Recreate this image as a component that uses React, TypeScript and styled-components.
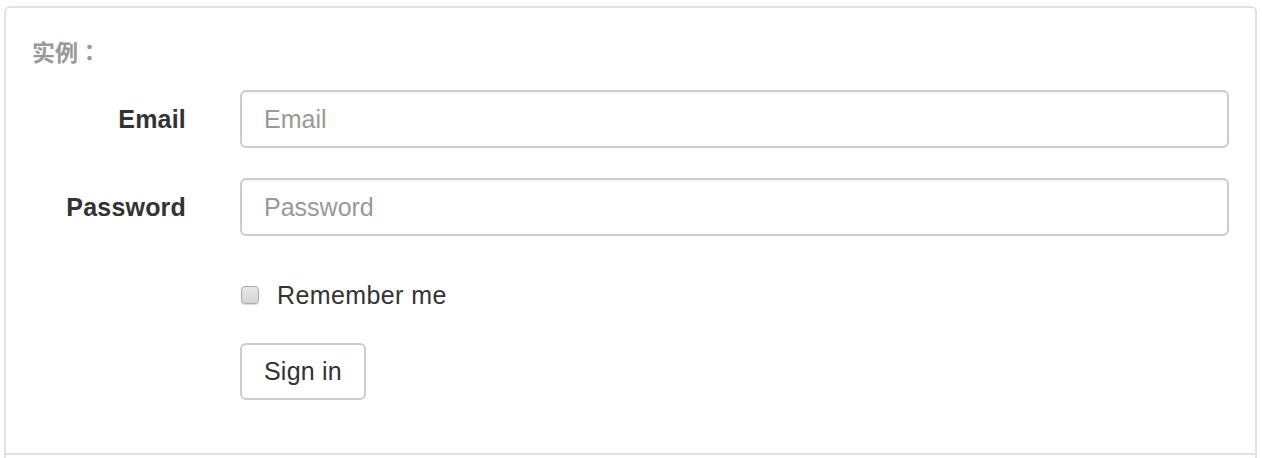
import styled, { createGlobalStyle } from "styled-components";

const GlobalStyle = createGlobalStyle`
  html, body {
    margin: 0;
    padding: 0;
    background: #fff;
    overflow: hidden;
  }
  body {
    font-family: "Liberation Sans", "Noto Sans CJK SC", sans-serif;
    color: #333;
  }
`;

const App = () => {
  return (
    <Page>
      <GlobalStyle />
      <Panel>
        <Example>
          <Title>实例：</Title>
          <Form onSubmit={(e) => e.preventDefault()}>
            <Row>
              <Label htmlFor="email">Email</Label>
              <Input id="email" type="email" placeholder="Email" />
            </Row>
            <Row>
              <Label htmlFor="password">Password</Label>
              <Input id="password" type="password" placeholder="Password" />
            </Row>
            <Row $offset={14}>
              <span />
              <Check>
                <CheckBox type="checkbox" />
                Remember me
              </Check>
            </Row>
            <Row $offset={3}>
              <span />
              <div>
                <Button type="submit">Sign in</Button>
              </div>
            </Row>
          </Form>
        </Example>
      </Panel>
    </Page>
  );
};

export default App;

const Page = styled.div`
  height: 458px;
  padding: 6px 5px 0 4px;
  box-sizing: border-box;
`;

const Panel = styled.div`
  height: 470px;
  border: 2px solid #e3e3e3;
  border-bottom: none;
  border-radius: 6px 6px 0 0;
  box-sizing: border-box;
`;

const Example = styled.div`
  height: 447px;
  box-sizing: border-box;
  padding: 28px 26px 0 26px;
  border-bottom: 2px solid #e3e3e3;
`;

const Title = styled.div`
  font-family: "Noto Sans CJK TC", "Noto Sans CJK SC", sans-serif;
  font-weight: 700;
  font-size: 23px;
  line-height: 30px;
  color: #999;
`;

const Form = styled.form`
  margin-top: 24px;
  display: flex;
  flex-direction: column;
  gap: 30px;
`;

const Row = styled.div<{ $offset?: number }>`
  display: grid;
  grid-template-columns: 154px 1fr;
  column-gap: 54px;
  align-items: center;
  margin-top: ${(p) => p.$offset ?? 0}px;
`;

const Label = styled.label`
  text-align: right;
  font-weight: 700;
  font-size: 25px;
  letter-spacing: 0.2px;
  color: #333;
`;

const Input = styled.input`
  height: 58px;
  box-sizing: border-box;
  border: 2px solid #ccc;
  border-radius: 6px;
  padding: 0 22px;
  font-family: "Liberation Sans", sans-serif;
  font-size: 25px;
  color: #555;
  box-shadow: inset 0 1px 2px rgba(0, 0, 0, 0.06);
  outline: none;

  &::placeholder {
    color: #999;
  }
`;

const Check = styled.label`
  display: flex;
  align-items: center;
  gap: 18px;
  font-size: 25px;
  letter-spacing: 0.4px;
  color: #333;
  line-height: 30px;
`;

const CheckBox = styled.input`
  appearance: none;
  margin: 0 0 0 1px;
  width: 18px;
  height: 18px;
  border: 1px solid #a9a9a9;
  border-radius: 4px;
  background: linear-gradient(#e6e6e6, #d6d6d6);
  box-shadow: 0 1px 1px rgba(0, 0, 0, 0.15);
`;

const Button = styled.button`
  height: 57px;
  padding: 0 22px;
  background: #fff;
  border: 2px solid #ccc;
  border-radius: 6px;
  font-family: "Liberation Sans", sans-serif;
  font-size: 25px;
  letter-spacing: 0.2px;
  color: #333;
  cursor: pointer;
`;
